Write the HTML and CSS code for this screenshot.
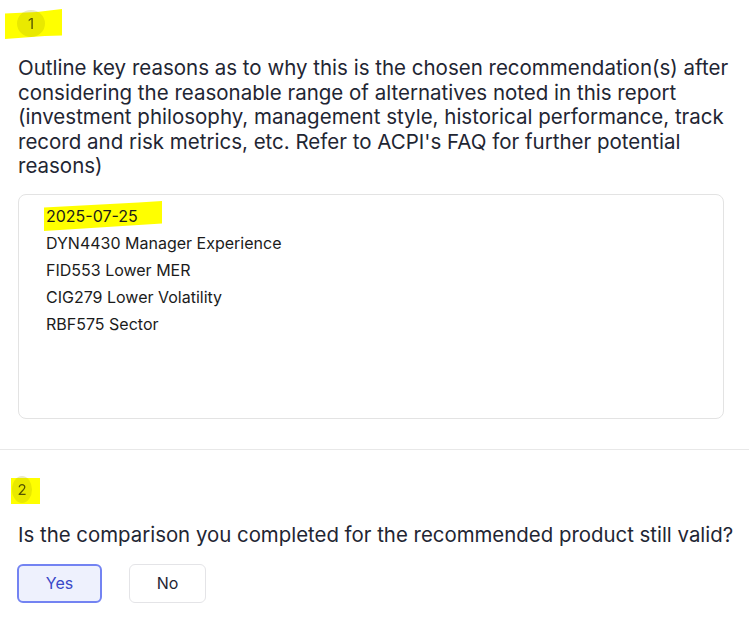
FILE: index.html
```html
<!DOCTYPE html>
<html>
<head>
<meta charset="utf-8">
<link rel="stylesheet" href="styles.css">
</head>
<body>
<section class="question q1">
  <div class="badge-wrap">
    <span class="hl hl-badge1"></span>
    <span class="badge">1</span>
  </div>
  <p class="prompt">Outline key reasons as to why this is the chosen recommendation(s) after considering the reasonable range of alternatives noted in this report (investment philosophy, management style, historical performance, track record and risk metrics, etc. Refer to ACPI's FAQ for further potential reasons)</p>
  <div class="answer">
    <div class="line date"><span class="hl hl-date"></span><span class="txt">2025-07-25</span></div>
    <div class="line">DYN4430 Manager Experience</div>
    <div class="line">FID553 Lower MER</div>
    <div class="line">CIG279 Lower Volatility</div>
    <div class="line">RBF575 Sector</div>
  </div>
</section>
<hr class="divider">
<section class="question q2">
  <div class="badge-wrap">
    <span class="hl hl-badge2"></span>
    <span class="badge badge-narrow">2</span>
  </div>
  <p class="prompt">Is the comparison you completed for the recommended product still valid?</p>
  <div class="choices">
    <button class="choice selected">Yes</button>
    <button class="choice">No</button>
  </div>
</section>
</body>
</html>
```

FILE: styles.css
```css
* { box-sizing: border-box; }
html, body { margin: 0; padding: 0; background: #fff; }
body {
  font-family: Inter, "Noto Sans", sans-serif;
  color: #1f2633;
  width: 749px;
  overflow: hidden;
}
.question { padding: 0 18px; }
.q1 { padding-top: 8px; padding-bottom: 30px; }
.q2 { padding-top: 24px; }
.badge-wrap { position: relative; height: 29px; width: 44px; isolation: isolate; }
.badge {
  position: relative;
  display: flex;
  align-items: center;
  justify-content: center;
  width: 28px;
  height: 27px;
  margin-left: -1px;
  margin-top: 2px;
  border-radius: 50%;
  background: #e9e9c6;
  font-size: 15px;
  color: #55551a;
  mix-blend-mode: multiply;
}
.badge-narrow { width: 20px; margin-left: -6px; }
.hl { position: absolute; background: #ffff00; }
.hl-badge1 {
  left: -13px; top: -1px; width: 57px; height: 30px;
  clip-path: polygon(0 15%, 56% 10%, 100% 0, 100% 88%, 70% 90%, 0 100%);
}
.hl-badge2 {
  left: -7px; top: 2px; width: 29px; height: 26px;
}
.prompt {
  margin: 17px -14px 0 0;
  font-size: 20.5px;
  line-height: 24.6px;
  color: #1f2633;
}
.q2 .prompt { margin-top: 18px; font-size: 20.4px; }
.answer {
  margin: 15px 7px 0 0;
  height: 225px;
  border: 1px solid #e3e3e3;
  border-radius: 8px;
  padding: 8px 27px;
  font-size: 16px;
  line-height: 27px;
  color: #1b1b1b;
}
.line { position: relative; }
.date .txt { position: relative; }
.hl-date {
  left: -2px; top: -2px; width: 118px; height: 30px;
  clip-path: polygon(0 22%, 80% 5%, 100% 0, 100% 75%, 0 100%);
}
.divider {
  margin: 0;
  border: 0;
  border-top: 1px solid #e8e8e8;
}
.choices { display: flex; gap: 27px; margin-top: 16px; margin-left: -1px; }
.choice {
  font-family: inherit;
  font-size: 16px;
  height: 39px;
  border-radius: 6px;
  background: #fff;
  border: 1px solid #e4e4e7;
  color: #1f2633;
  cursor: pointer;
}
.choice.selected {
  width: 85px;
  background: #eef1fd;
  border: 2px solid #7383f2;
  color: #3a48c8;
}
.choice:not(.selected) { width: 77px; }
```
